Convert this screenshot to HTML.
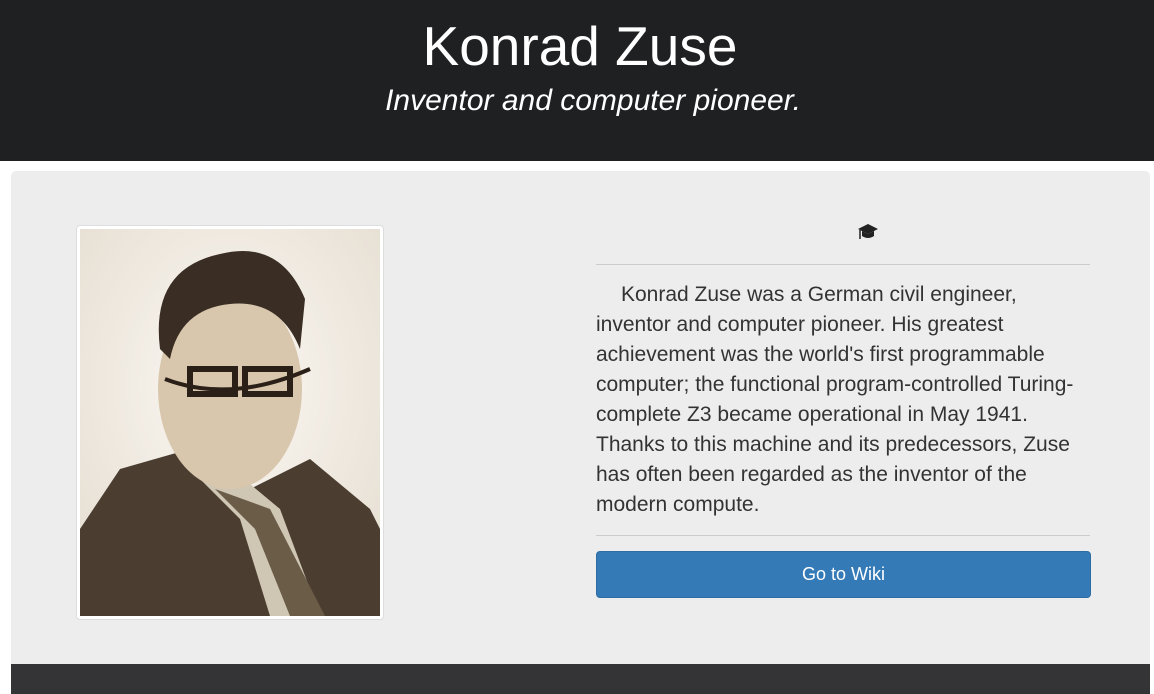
<!DOCTYPE html>
<html><head><meta charset="utf-8"><style>
body{margin:0;background:#fff;font-family:"Liberation Sans",Arial,sans-serif;width:1154px;height:686px;overflow:hidden;position:relative}
.hdr{position:absolute;left:0;top:0;width:1154px;height:161px;background:#1f2022;color:#fff;text-align:center}
.hdr h1{margin:0;position:absolute;top:14px;left:3px;width:100%;font-size:55px;font-weight:normal}
.hdr h2{margin:0;position:absolute;top:84px;left:16px;width:100%;font-size:30px;font-weight:normal;font-style:italic}
.panel{position:absolute;left:11px;top:171px;width:1139px;height:520px;background:#ededed;border-radius:5px}
.foot{position:absolute;left:11px;top:664px;width:1139px;height:30px;background:#343436}
.frame{position:absolute;left:76px;top:225px;width:300px;height:387px;padding:3px;background:#fff;border:1px solid #ddd;border-radius:4px}
.photo{width:300px;height:387px;background:#f3efe9;position:relative;overflow:hidden}
.txt{position:absolute;left:596px;top:280px;width:494px;font-size:21px;line-height:30px;color:#333;text-indent:25px}
.hr{position:absolute;left:596px;width:494px;height:1px;background:#ccc}
.btn{position:absolute;left:596px;top:551px;width:493px;height:45px;background:#337ab7;border:1px solid #2e6da4;border-radius:4px;color:#fff;font-size:18px;text-align:center;line-height:45px}
</style></head><body>
<div class="hdr"><h1>Konrad Zuse</h1><h2>Inventor and computer pioneer.</h2></div>
<div class="panel"></div>
<div class="foot"></div>
<div class="frame"><div class="photo">
<svg width="300" height="387" viewBox="0 0 300 387">
<defs><radialGradient id="bg" cx="0.5" cy="0.4" r="0.7"><stop offset="0" stop-color="#fbf8f3"/><stop offset="1" stop-color="#e6ded2"/></radialGradient></defs>
<rect width="300" height="387" fill="url(#bg)"/>
<path d="M0 300 L40 240 L110 220 L170 260 L230 230 L290 280 L300 300 L300 387 L0 387Z" fill="#4b3e30"/>
<path d="M120 250 L160 290 L190 387 L240 387 L200 280 L170 255Z" fill="#cfc6b4"/>
<path d="M135 260 L175 300 L210 387 L245 387 L190 280Z" fill="#6b5c48"/>
<ellipse cx="150" cy="160" rx="72" ry="100" fill="#d9c7ad"/>
<path d="M80 120 Q70 40 140 25 Q200 10 225 70 L220 120 Q200 70 150 75 Q100 80 90 130Z" fill="#3a2e24"/>
<path d="M110 140 h45 v25 h-45Z M165 140 h45 v25 h-45Z" fill="none" stroke="#2a2018" stroke-width="6"/>
<path d="M85 150 Q150 175 230 140" fill="none" stroke="#2a2018" stroke-width="4"/>
</svg>
</div></div>
<svg style="position:absolute;left:857px;top:223px" width="22" height="18" viewBox="0 0 22 18"><path d="M11 1 L21 6 L11 11 L1 6Z" fill="#222"/><path d="M5 8 v5 q6 4 12 0 v-5 l-6 3Z" fill="#222"/><path d="M3 7 v9" stroke="#222" stroke-width="1.5"/></svg>
<div class="hr" style="top:264px"></div>
<div class="txt">Konrad Zuse was a German civil engineer, inventor and computer pioneer. His greatest achievement was the world's first programmable computer; the functional program-controlled Turing-complete Z3 became operational in May 1941. Thanks to this machine and its predecessors, Zuse has often been regarded as the inventor of the modern compute.</div>
<div class="hr" style="top:535px"></div>
<div class="btn">Go to Wiki</div>
</body></html>
